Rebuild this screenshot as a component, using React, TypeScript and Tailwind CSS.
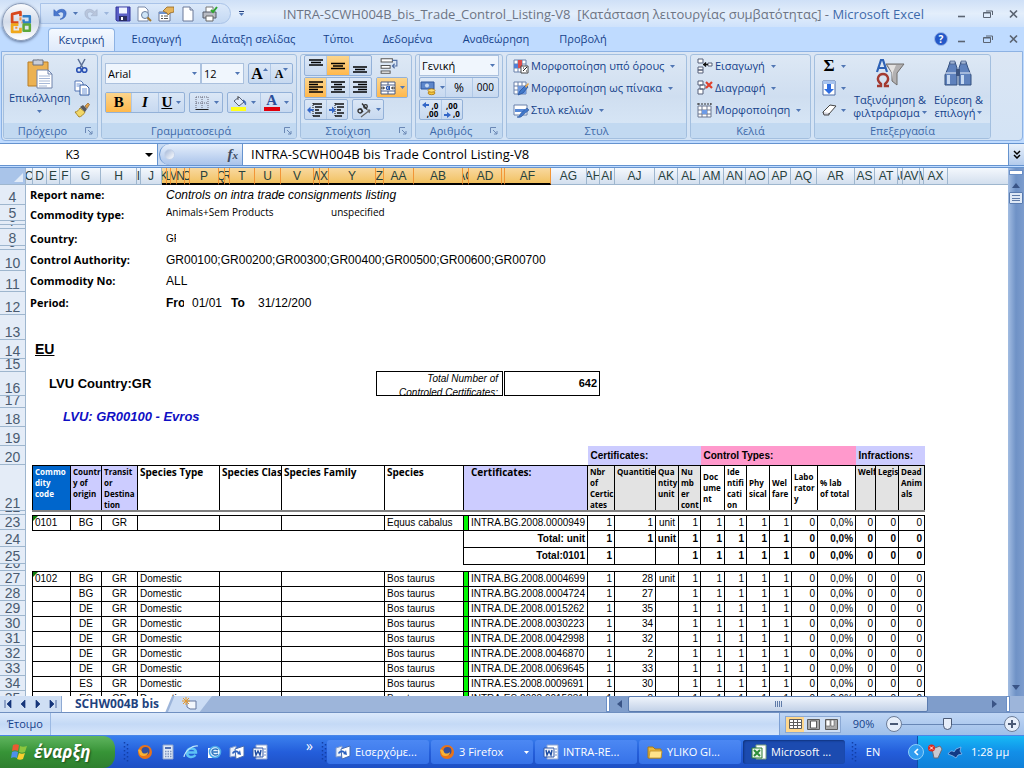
import React from 'react';
import clsx from 'clsx';

const Down: React.FC<{ className?: string }> = ({ className }) => (
  <svg viewBox="0 0 5 3" className={clsx('w-[5px] h-[3px] shrink-0', className)}>
    <path d="M0 0h5L2.500 3z" fill="#5076b4" />
  </svg>
);

const Icon: React.FC<{ size?: string; children: React.ReactNode }> = ({ size = 'w-4 h-4', children }) => (
  <svg viewBox="0 0 16 16" className={clsx(size, 'shrink-0')} fill="none">
    {children}
  </svg>
);

/* ---------- icons ---------- */

const OfficeLogo = () => (
  <svg viewBox="0 0 24 24" className="w-[25px] h-[25px]" fill="none" strokeLinejoin="round">
    <path d="M9 12H3V4l8-2v4" stroke="#d8481c" strokeWidth="2.600" />
    <path d="M13 6h7v6h-6V9" stroke="#2f7fc8" strokeWidth="2.400" />
    <path d="M9 14H3v7h8v-4" stroke="#f0a81c" strokeWidth="2.600" />
    <path d="M14 14h6v6h-6z" stroke="#5da83a" strokeWidth="2.400" />
    <path d="M11 7v3M7 16v2M12 12h1" stroke="#f7913a" strokeWidth="2" />
  </svg>
);

const Undo = () => (
  <Icon size="w-[14px] h-[14px]">
    <path d="M1 3v7h7L5.500 7.500C8 5 12 5 12 8.500S10 13 8 14c4 0 7-3 7-7 0-5-7-6-11-1.500z" fill="#4b79cf" stroke="#2d59b0" strokeWidth=".6" />
  </Icon>
);

const Redo = () => (
  <Icon size="w-[14px] h-[14px]">
    <path d="M15 3v7H8l2.500-2.500C8 5 4 5 4 8.500S6 13 8 14c-4 0-7-3-7-7 0-5 7-6 11-1.500z" fill="#b9c6dc" stroke="#9dadc8" strokeWidth=".6" />
  </Icon>
);

const Save = () => (
  <Icon>
    <path d="M1 1h14v14H2l-1-1z" fill="#5a5fc6" stroke="#33379b" />
    <path d="M4 1.500h8v6H4z" fill="#eef3ff" />
    <path d="M4 10h8v5H4z" fill="#292d62" />
    <path d="M6 11h2v3H6z" fill="#fff" />
  </Icon>
);

const Preview = () => (
  <Icon>
    <path d="M2 1h7l3 3v11H2z" fill="#fff" stroke="#7a8aa8" />
    <circle cx="9" cy="9" r="3.500" fill="#cfe5f7" stroke="#6b7f9d" />
    <path d="M11.500 11.500L15 15" stroke="#a67a2c" strokeWidth="2" />
  </Icon>
);

const Props = () => (
  <Icon>
    <path d="M1 6h11v9H1z" fill="#fff" stroke="#6a7998" />
    <path d="M1 6h11v2H1z" fill="#6d92cf" />
    <path d="M3 10h2M3 12.500h2M6 10h4M6 12.500h4" stroke="#555" />
    <path d="M5 5l4-4h7v5l-4 1-2 2-1-2z" fill="#e6b45c" stroke="#936520" strokeWidth=".8" />
  </Icon>
);

const NewDoc = () => (
  <Icon>
    <path d="M3 1h7l3 3v11H3z" fill="#fff" stroke="#6a7998" />
    <path d="M10 1v3h3" fill="#d5dff0" stroke="#6a7998" />
  </Icon>
);

const Printer = () => (
  <Icon>
    <path d="M4 1h7v6H4z" fill="#fff" stroke="#777" />
    <path d="M1 6h13v6H1z" fill="#b9bcc4" stroke="#555b68" />
    <path d="M4 10h7v5H4z" fill="#fff" stroke="#666" />
    <path d="M9 4l2 2 4-5" stroke="#2fa52f" strokeWidth="2" />
  </Icon>
);

const Paste = () => (
  <svg viewBox="0 0 28 32" className="w-7 h-8" fill="none">
    <path d="M2 4h20v24H2z" fill="#ecb252" stroke="#b87d25" />
    <path d="M7 2h4a2 2 0 012 0h4v5H7z" fill="#c9ced8" stroke="#6a7180" />
    <path d="M11 12h11l4 4v14H11z" fill="#fff" stroke="#6f83ac" />
    <path d="M22 12v4h4" stroke="#6f83ac" />
    <path d="M13 18h11M13 20.500h11M13 23h11M13 25.500h11M13 28h8" stroke="#9cb0d2" strokeWidth=".9" />
  </svg>
);

const Cut = () => (
  <Icon>
    <path d="M4 1l5 9M11 1L6 10" stroke="#5b6f96" strokeWidth="1.500" />
    <circle cx="5" cy="12" r="2.300" stroke="#2b52b4" strokeWidth="1.600" />
    <circle cx="10.500" cy="12" r="2.300" stroke="#2b52b4" strokeWidth="1.600" />
  </Icon>
);

const Copy = () => (
  <Icon>
    <path d="M1 1h6l2 2v8H1z" fill="#fff" stroke="#5476b6" />
    <path d="M6 5h6l3 3v7H6z" fill="#fff" stroke="#31589f" />
    <path d="M2.500 4h4M2.500 6h3M8 9h5M8 11h5M8 13h5" stroke="#6c93d6" />
  </Icon>
);

const Brush = () => (
  <Icon>
    <path d="M1 10c2 0 4-2 5-4l5 4c-1 2-4 5-6 5-1-2-3-3-4-5z" fill="#f1d768" stroke="#a8862a" />
    <path d="M6 5l3-2 4 4-2 3z" fill="#55585f" />
    <path d="M11 4l3-3 1.500 1.500-2.500 4z" fill="#e0a049" stroke="#83561c" strokeWidth=".6" />
  </Icon>
);

const lineSets = {
  top: 'M1 2h14M3 4.500h10M1 7h14',
  middle: 'M1 5.500h14M3 8h10M1 10.500h14',
  bottom: 'M1 9h14M3 11.500h10M1 14h14',
  left: 'M1 2h14M1 4.500h9M1 7h14M1 9.500h9M1 12h14',
  center: 'M1 2h14M4 4.500h8M1 7h14M4 9.500h8M1 12h14',
  right: 'M1 2h14M6 4.500h9M1 7h14M6 9.500h9M1 12h14',
};

const Lines: React.FC<{ kind: keyof typeof lineSets }> = ({ kind }) => (
  <Icon>
    <path d={lineSets[kind]} stroke="#000" strokeWidth="1.300" />
  </Icon>
);

const Indent: React.FC<{ flip?: boolean }> = ({ flip }) => (
  <Icon>
    <path d="M6 2h9M8 5h7M8 8h4M8 11h7M6 14h7" stroke="#111" strokeWidth="1.500" />
    <path d="M6 1v14" stroke="#111" strokeDasharray="1 1" />
    <path d={flip ? 'M0 7h3V4.500L6.500 8 3 11.500V9H0z' : 'M6.500 7h-3V4.500L0 8l3.500 3.500V9h3z'} fill="#3467c8" />
  </Icon>
);

const Wrap = () => (
  <Icon size="w-[18px] h-[18px]">
    <path d="M1 1.500h10v3H1zM1 7.500h8v2.500H1zM1 12.500h8v2H1z" fill="#fff" stroke="#555" strokeWidth=".9" />
    <path d="M11 3h4v5h-4M13 6l-2 2 2 2" stroke="#5471a5" />
  </Icon>
);

const Merge = () => (
  <Icon>
    <path d="M1 2h14v12H1zM1 5h14M1 11h14M8 2v3M8 11v3" fill="#fff" stroke="#4a5c84" />
    <path d="M1 8h3M12 8h3M3 6.500L4.500 8 3 9.500M13 6.500L11.500 8 13 9.500" stroke="#222" />
    <circle cx="7.700" cy="8" r="1.400" stroke="#1f4fae" strokeWidth="1.200" />
    <path d="M9.500 6v4" stroke="#1f4fae" />
  </Icon>
);

const Orient = () => (
  <Icon>
    <circle cx="4" cy="9" r="2" stroke="#333" strokeWidth="1.300" />
    <path d="M4.500 6.500L7 10M6 1.500l5 6" stroke="#333" strokeWidth="1.300" />
    <circle cx="9.500" cy="4.500" r="1.800" stroke="#333" strokeWidth="1.300" />
    <path d="M5 15L14 8M14 8h-3M14 8l-1 3" stroke="#666" strokeWidth="1.200" />
  </Icon>
);

const Money = () => (
  <Icon>
    <path d="M1 2h13v7H1z" fill="#5c86cb" stroke="#2c549c" />
    <circle cx="7" cy="5.500" r="2" fill="#c5d8f3" />
    <ellipse cx="11.500" cy="13" rx="3.500" ry="1.700" fill="#f5c63c" stroke="#a97512" strokeWidth=".8" />
    <ellipse cx="11.500" cy="10.500" rx="3.500" ry="1.700" fill="#ffdf72" stroke="#a97512" strokeWidth=".8" />
  </Icon>
);

const Decimals: React.FC<{ less?: boolean }> = ({ less }) => (
  <span className="relative flex flex-col w-4 h-4 text-[8px] leading-[8px] font-bold text-black">
    <span className={clsx(less ? '' : 'text-right')}>{less ? ',00' : ',0'}</span>
    <span className="text-right">{less ? ',0' : ',00'}</span>
    <svg viewBox="0 0 7 6" className={clsx('absolute w-[7px] h-[6px]', less ? 'left-0 bottom-0' : 'left-0 top-0')}>
      <path d={less ? 'M0 2h3V0l4 3-4 3V4H0z' : 'M7 2H4V0L0 3l4 3V4h3z'} fill="#3467c8" />
    </svg>
  </span>
);

const Borders = () => (
  <Icon>
    <path d="M2 2h12v12M2 2v12M8 2v12M2 8h12" stroke="#667" strokeDasharray="1 1" />
    <path d="M1.500 14.500h13" stroke="#222" strokeWidth="1.200" />
  </Icon>
);

const Fill = () => (
  <Icon>
    <path d="M3 6l5-4 5 5-5 4z" fill="#dfe9f8" stroke="#555f75" />
    <path d="M12 5c3 1 3 3 2.500 5L13 7z" fill="#3e6fc8" stroke="#2d55a4" strokeWidth=".6" />
    <path d="M7 1v4" stroke="#555" />
    <path d="M0 12h15v4H0z" fill="#ffff1a" />
  </Icon>
);

const GridBase = 'M1 2h12v12H1zM1 6h12M1 10h12M5 2v12M9 2v12';

const Conditional = () => (
  <Icon>
    <path d={GridBase} fill="#fff" stroke="#6980aa" />
    <path d="M5 2h4v8H5z" fill="#dc4d4d" />
    <path d="M1 6h4v4H1z" fill="#4f7fd6" />
    <path d="M8 8h7v7H8z" fill="#fff" stroke="#444" />
    <path d="M10 13l4-4M10 10h1M13 13h1" stroke="#222" />
  </Icon>
);

const FormatTable = () => (
  <Icon>
    <path d={GridBase} fill="#fff" stroke="#6980aa" />
    <path d="M5 6h8v8H5z" fill="#6d98de" />
    <path d="M5 15l2-4 6-6 2 2-5 6z" fill="#4278c9" stroke="#2a549c" strokeWidth=".8" />
    <path d="M12 6l3-3 1 1-3 4z" fill="#e3a752" />
  </Icon>
);

const CellStyles = () => (
  <Icon>
    <path d="M1 3h13v10H1z" fill="#fff" stroke="#6980aa" />
    <path d="M2 7h10v3H2z" fill="#5789d8" />
    <path d="M4 15c2 0 3-2 4-4l6-5 2 2-6 5c-1 2-4 3-6 2z" fill="#4278c9" stroke="#2a549c" strokeWidth=".6" />
  </Icon>
);

const InsertCells = () => (
  <Icon>
    <path d="M1 1h5v4H1zM1 9h5v3H1zM1 12h5v3H1zM11 5h4v3h-4z" fill="#fff" stroke="#555f78" />
    <path d="M6 6.500h5M9 4.500l-2 2 2 2" stroke="#111" strokeWidth="1.400" />
  </Icon>
);

const DeleteCells = () => (
  <Icon>
    <path d="M1 1h5v4H1zM3 5h5v4H3zM1 9h5v5H1z" fill="#fff" stroke="#555f78" />
    <path d="M9 2l6 6M15 2L9 8" stroke="#e0402c" strokeWidth="2.200" />
  </Icon>
);

const FormatCells = () => (
  <Icon>
    <path d="M1 4h13v11H1zM1 8h13M1 12h13M5 4v11M10 4v11" fill="#fff" stroke="#6a7690" />
    <path d="M5 8h5v4H5z" fill="#6d9be6" />
    <path d="M1 1v2M1 2h13M14 1v2" stroke="#333" strokeDasharray="2 1" />
  </Icon>
);

const FillDown = () => (
  <Icon>
    <path d="M2 1h12v14H2z" fill="#fff" stroke="#4c6ca8" />
    <path d="M2 1h12v3H2z" fill="#a7c3ee" />
    <path d="M6 4h4v5h3l-5 5-5-5h3z" fill="#2f6de0" />
  </Icon>
);

const Eraser = () => (
  <Icon>
    <path d="M2 10l7-7 6 1-7 8H3z" fill="#fff" stroke="#444" />
    <path d="M2 10l1 3h5v-2" fill="#d4d4de" stroke="#444" />
  </Icon>
);

const SortFilter = () => (
  <svg viewBox="0 0 30 30" className="w-[30px] h-[30px]" fill="none">
    <path d="M11 5h18l-7 9v12l-5-4v-8z" fill="#b3b1b2" stroke="#716e6c" />
    <path d="M13 6h8l-3 7-1 8v-7z" fill="#e4e2e1" />
    <path d="M2 13L6 1h2l4 12M4 9h6" stroke="#2f62b5" strokeWidth="2.200" />
    <path d="M2 27h4v-2c-6-5-2-10 2-10s8 5 2 10v2h4" stroke="#a33a31" strokeWidth="2.400" />
  </svg>
);

const Binoculars = () => (
  <svg viewBox="0 0 30 28" className="w-[30px] h-7" fill="none">
    <path d="M5 9l2-6h5l2 6v17H2V16zM16 9l2-6h5l2 6 3 7v10H16z" fill="#5f82bd" stroke="#34507f" />
    <path d="M4 16h3v9H4zM18 16h3v9h-3z" fill="#c6d9f2" />
    <path d="M2 14h12M16 14h12" stroke="#e8effa" />
    <path d="M13 10h4v7h-4z" fill="#3d5580" />
    <path d="M7 2h5v3H7zM18 2h5v3h-5z" fill="#9fb3d3" stroke="#455c86" strokeWidth=".7" />
  </svg>
);

const Firefox = () => (
  <Icon>
    <circle cx="8" cy="8" r="7" fill="#e8731a" />
    <circle cx="8.500" cy="7" r="4" fill="#34509e" />
    <path d="M1 6c2-1 3 0 4 2s4 2 6 0c0 4-5 5-8 3z" fill="#f9b233" />
  </Icon>
);

const Calc = () => (
  <Icon>
    <path d="M3 1h10v14H3z" fill="#dfe8f6" stroke="#8fa4cb" />
    <path d="M5 3h6v2H5z" fill="#4f70b4" />
    <path d="M5 7.500h7M5 10h7M5 12.500h7" stroke="#7d93bd" strokeWidth="1.500" strokeDasharray="1.500 1" />
  </Icon>
);

const Explorer = () => (
  <Icon>
    <path d="M3 8.500h10C13 3 4 3 4 8.500S10 14 12.500 11" stroke="#5ec3f5" strokeWidth="2.500" />
    <path d="M1 13C2 7 9 1 15 2" stroke="#bfe6fa" strokeWidth="1.200" />
  </Icon>
);

const OutlookExpress = () => (
  <Icon>
    <path d="M2 4h8v10H2z" fill="#fff" />
    <circle cx="9" cy="8" r="5.500" fill="#e6f3fd" stroke="#4ca9e8" strokeWidth="1.600" />
    <path d="M12 6c-2-2-6-1-6 2s4 4 6 2M7 8h5" stroke="#2a73bf" strokeWidth="1.500" />
  </Icon>
);

const MailIcon = () => (
  <Icon>
    <path d="M1 4l6-2v10l-6 1z" fill="#e9f0fb" stroke="#7e99cb" />
    <path d="M6 5l9-3v10l-8 3z" fill="#fff" stroke="#456bb0" />
    <path d="M3 9c2-3 5-3 7-1l1-2 1 5-4-1 1-1c-2-1-3-1-5 1z" fill="#2b61bf" />
  </Icon>
);

const WordIcon = () => (
  <Icon>
    <path d="M4 1h11v14H4z" fill="#fff" stroke="#8ba3d1" />
    <path d="M1 4h10v9H1z" fill="#f3f6fc" stroke="#3159a8" />
    <path d="M3 6l1 5 2-4 2 4 1-5" stroke="#1e4ca0" strokeWidth="1.400" />
    <path d="M12 5h2M12 8h2M12 11h2" stroke="#6f8cc4" />
  </Icon>
);

const FolderIcon = () => (
  <Icon>
    <path d="M1 3h5l2 2h6v9H1z" fill="#e9b73f" stroke="#a87a16" />
    <path d="M3 7h12l-1 7H2z" fill="#ffe38a" stroke="#bb8d23" strokeWidth=".8" />
  </Icon>
);

const ExcelIcon = () => (
  <Icon>
    <path d="M5 1h10v14H5z" fill="#fff" stroke="#7da37f" />
    <path d="M1 4h10v10H1z" fill="#e9f5e6" stroke="#2b7a35" />
    <path d="M3 6l6 6M9 6l-6 6" stroke="#2b8c38" strokeWidth="2" />
  </Icon>
);

const WindowsFlag = () => (
  <svg viewBox="0 0 20 18" className="w-5 h-[18px]">
    <path d="M3 2c2-1 4-1 6 0L8 8C6 7 4 7 2 8z" fill="#ea5a32" />
    <path d="M10 3c2 1 4 1 7 0l-2 6c-2 1-4 1-6 0z" fill="#8cc63e" />
    <path d="M2 9c2-1 4-1 6 0l-1 6c-2-1-4-1-6 0z" fill="#4f8fea" />
    <path d="M9 10c2 1 4 1 6 0l-2 6c-2 1-4 1-6 0z" fill="#fbcf2e" />
  </svg>
);

/* ---------- chrome ---------- */

const WindowButtons: React.FC<{ label: string }> = ({ label }) => (
  <div className="flex items-center gap-[14px]">
    <button aria-label={`Minimize ${label}`} className="w-3 h-3">
      <svg viewBox="0 0 12 12"><path d="M2 8.500h7" stroke="#5b6472" strokeWidth="1.600" /></svg>
    </button>
    <button aria-label={`Restore ${label}`} className="w-3 h-3">
      <svg viewBox="0 0 12 12" fill="none"><path d="M1.500 4.500h7v5h-7zM1.500 5h7M4 3h6.500v4" stroke="#5b6472" /></svg>
    </button>
    <button aria-label={`Close ${label}`} className="w-3 h-3">
      <svg viewBox="0 0 12 12"><path d="M2 2.500l7 7M9 2.500l-7 7" stroke="#5b6472" strokeWidth="1.700" /></svg>
    </button>
  </div>
);

const TitleBar = () => (
  <header className="h-[27px] flex items-center bg-linear-to-b from-[#cfe0f7] via-[#e3eefb] to-[#cfe2fb] pl-10 pr-1">
    <div className="h-[21px] w-[191px] shrink-0 flex items-center justify-between rounded-r-full border border-[#a9c3e8] bg-linear-to-b from-[#dce9fa] to-[#c3d8f3] pl-3 pr-3">
      <button aria-label="Undo"><Undo /></button>
      <Down />
      <button aria-label="Redo"><Redo /></button>
      <Down className="opacity-40" />
      <button aria-label="Save"><Save /></button>
      <button aria-label="Preview"><Preview /></button>
      <button aria-label="Properties"><Props /></button>
      <button aria-label="New"><NewDoc /></button>
      <button aria-label="Print"><Printer /></button>
    </div>
    <button aria-label="Customize" className="flex flex-col items-center gap-px w-5 shrink-0">
      <span className="w-[5px] h-px bg-[#27407c]" />
      <Down />
    </button>
    <h1 className="flex-1 text-center text-[13px] leading-4 text-[#6c7484] whitespace-pre">
      INTRA-SCWH004B_bis_Trade_Control_Listing-V8{'  '}[Κατάσταση λειτουργίας συμβατότητας] -{' '}
      <span className="text-[#3e6aaa]">Microsoft Excel</span>
    </h1>
    <WindowButtons label="application" />
  </header>
);

const tabs = [
  { name: 'Εισαγωγή', width: 'w-[83px]' },
  { name: 'Διάταξη σελίδας', width: 'w-[111px]' },
  { name: 'Τύποι', width: 'w-[59px]' },
  { name: 'Δεδομένα', width: 'w-[79px]' },
  { name: 'Αναθεώρηση', width: 'w-[98px]' },
  { name: 'Προβολή', width: 'w-[76px]' },
];

const TabBar = () => (
  <nav className="h-6 flex items-end bg-[#bfdbff] pl-12 pr-1">
    <button className="h-[23px] w-[67px] rounded-t border border-b-0 border-[#8db2e3] bg-linear-to-b from-[#f4f9ff] to-[#dfeafa] text-[11px] text-[#15428b]">
      Κεντρική
    </button>
    {tabs.map((t) => (
      <button key={t.name} className={clsx('h-[23px] text-[11px] text-[#15428b]', t.width)}>
        {t.name}
      </button>
    ))}
    <div className="flex-1 h-6 flex items-center justify-end gap-2">
      <button aria-label="Help" className="w-[14px] h-[14px] rounded-full border border-[#9db8e8] bg-[#2458c8] text-white text-[10px] leading-3 font-bold">
        ?
      </button>
      <WindowButtons label="workbook" />
    </div>
  </nav>
);

const Group: React.FC<{ title: string; width: string; launcher?: boolean; children: React.ReactNode }> = ({ title, width, launcher, children }) => (
  <section className={clsx('flex flex-col rounded-[3px] border border-[#a3bfdf] bg-linear-to-b from-[#dde8f5] via-[#cfdef0] to-[#dae9f8] overflow-hidden shrink-0', width)}>
    <div className="flex-1 min-h-0 px-[3px]">{children}</div>
    <div className={clsx('relative h-[15px] bg-[#c2d9f1] text-center text-[11px] leading-[15px] text-[#3e6aaa]', launcher && 'pr-4')}>
      {title}
      {launcher && (
        <button aria-label={title} className="absolute right-1 top-1 w-2 h-2">
          <svg viewBox="0 0 8 8" fill="none"><path d="M.5 6V.5H6M3 3l4 4M7 4v3H4" stroke="#6b88b5" /></svg>
        </button>
      )}
    </div>
  </section>
);

const BtnGroup: React.FC<{ className?: string; children: React.ReactNode }> = ({ className, children }) => (
  <div className={clsx('h-[21px] flex items-stretch rounded-[2px] border border-[#93b1d8] bg-linear-to-b from-[#dbe7f6] to-[#c7d9f0] divide-x divide-[#b0c8e6]', className)}>
    {children}
  </div>
);

const Btn: React.FC<{ label: string; active?: boolean; drop?: boolean; children: React.ReactNode }> = ({ label, active, drop, children }) => (
  <button
    aria-label={label}
    className={clsx('flex-1 flex items-center justify-center gap-1', active && 'bg-linear-to-b from-[#fbd58c] to-[#ffb84a]')}
  >
    {children}
    {drop && <Down />}
  </button>
);

const Combo: React.FC<{ label: string; value: string; className: string }> = ({ label, value, className }) => (
  <label className={clsx('relative h-[21px] flex items-center', className)}>
    <select aria-label={label} className="w-full h-full appearance-none border border-[#abc1de] bg-[#f0f6fd] pl-[2px] text-[11px] leading-4 text-black">
      <option>{value}</option>
    </select>
    <Down className="absolute right-1" />
  </label>
);

const TextBtn: React.FC<{ icon: React.ReactNode; text: string }> = ({ icon, text }) => (
  <button className="h-[22px] flex items-center gap-[2px] text-[11px] text-[#15428b] whitespace-nowrap">
    {icon}
    <span>{text}</span>
    <Down className="ml-1" />
  </button>
);

const Ribbon = () => (
  <div className="mx-px h-[90px] flex gap-[3px] rounded-b border border-[#8db2e3] bg-linear-to-b from-[#dbe6f4] to-[#d3e3f5] px-px pt-[2px] pb-px">
    <Group title="Πρόχειρο" width="w-[95px]" launcher>
      <div className="flex justify-between pt-[3px] pr-1">
        <button className="flex flex-col items-center text-[11px] leading-4 text-[#15428b] pl-[2px]">
          <Paste />
          Επικόλληση
          <Down className="mt-1" />
        </button>
        <div className="flex flex-col gap-[6px]">
          <button aria-label="Cut"><Cut /></button>
          <button aria-label="Copy"><Copy /></button>
          <button aria-label="Format painter"><Brush /></button>
        </div>
      </div>
    </Group>

    <Group title="Γραμματοσειρά" width="w-[196px]" launcher>
      <div className="flex flex-col gap-2 pt-2">
        <div className="flex">
          <Combo label="Font" value="Arial" className="w-24" />
          <Combo label="Font size" value="12" className="w-[43px]" />
          <BtnGroup className="ml-1 w-[45px] font-[Liberation_Serif] font-bold text-black">
            <Btn label="Grow font"><span className="text-[16px]">A</span><Down className="rotate-180 -ml-1 mb-2" /></Btn>
            <Btn label="Shrink font"><span className="text-[12px]">A</span><Down className="-ml-1 mb-2" /></Btn>
          </BtnGroup>
        </div>
        <div className="flex gap-1 font-[Liberation_Serif] font-bold text-[15px] text-black">
          <BtnGroup className="w-20">
            <Btn label="Bold" active>B</Btn>
            <Btn label="Italic"><i>I</i></Btn>
            <Btn label="Underline" drop><u>U</u></Btn>
          </BtnGroup>
          <BtnGroup className="w-[34px]">
            <Btn label="Borders" drop><Borders /></Btn>
          </BtnGroup>
          <BtnGroup className="w-[66px]">
            <Btn label="Fill colour" drop><Fill /></Btn>
            <Btn label="Font colour" drop>
              <span className="flex flex-col items-center text-[#2d4f9a] leading-[13px]">A<span className="w-4 h-1 bg-[#e0000c]" /></span>
            </Btn>
          </BtnGroup>
        </div>
      </div>
    </Group>

    <Group title="Στοίχιση" width="w-28" launcher>
      <div className="flex flex-col gap-px">
        <div className="flex gap-2">
          <BtnGroup className="w-[68px]">
            <Btn label="Top align"><Lines kind="top" /></Btn>
            <Btn label="Middle align" active><Lines kind="middle" /></Btn>
            <Btn label="Bottom align"><Lines kind="bottom" /></Btn>
          </BtnGroup>
          <button aria-label="Wrap text"><Wrap /></button>
        </div>
        <div className="flex gap-1">
          <BtnGroup className="w-[68px]">
            <Btn label="Align left" active><Lines kind="left" /></Btn>
            <Btn label="Align center"><Lines kind="center" /></Btn>
            <Btn label="Align right"><Lines kind="right" /></Btn>
          </BtnGroup>
          <BtnGroup className="w-8">
            <Btn label="Merge" active drop><Merge /></Btn>
          </BtnGroup>
        </div>
        <div className="flex gap-1">
          <BtnGroup className="w-11">
            <Btn label="Decrease indent"><Indent /></Btn>
            <Btn label="Increase indent"><Indent flip /></Btn>
          </BtnGroup>
          <BtnGroup className="w-8">
            <Btn label="Orientation" drop><Orient /></Btn>
          </BtnGroup>
        </div>
      </div>
    </Group>

    <Group title="Αριθμός" width="w-[88px]" launcher>
      <div className="flex flex-col gap-px">
        <Combo label="Number format" value="Γενική" className="w-20" />
        <BtnGroup className="w-20 text-[12px] text-black">
          <Btn label="Currency" drop><Money /></Btn>
          <Btn label="Percent">%</Btn>
          <Btn label="Thousands"><span className="text-[10px]">000</span></Btn>
        </BtnGroup>
        <BtnGroup className="w-11">
          <Btn label="Increase decimal"><Decimals /></Btn>
          <Btn label="Decrease decimal"><Decimals less /></Btn>
        </BtnGroup>
      </div>
    </Group>

    <Group title="Στυλ" width="w-[181px]">
      <div className="flex flex-col items-start pl-[3px]">
        <TextBtn icon={<Conditional />} text="Μορφοποίηση υπό όρους" />
        <TextBtn icon={<FormatTable />} text="Μορφοποίηση ως πίνακα" />
        <TextBtn icon={<CellStyles />} text="Στυλ κελιών" />
      </div>
    </Group>

    <Group title="Κελιά" width="w-[121px]">
      <div className="flex flex-col items-start pl-[3px]">
        <TextBtn icon={<InsertCells />} text="Εισαγωγή" />
        <TextBtn icon={<DeleteCells />} text="Διαγραφή" />
        <TextBtn icon={<FormatCells />} text="Μορφοποίηση" />
      </div>
    </Group>

    <Group title="Επεξεργασία" width="w-[177px]">
      <div className="flex gap-1 pl-[3px] pr-1">
        <div className="flex flex-col">
          <button aria-label="Sum" className="h-[22px] flex items-center gap-1 font-[Liberation_Serif] text-[17px] font-bold text-black"><span className="w-4">Σ</span><Down /></button>
          <button aria-label="Fill" className="h-[22px] flex items-center gap-1"><FillDown /><Down /></button>
          <button aria-label="Clear" className="h-[22px] flex items-center gap-1"><Eraser /><Down /></button>
        </div>
        <button className="flex-1 pt-1 flex flex-col items-center text-[11px] leading-[13px] text-[#15428b] whitespace-nowrap">
          <SortFilter />
          <span className="mt-1">Ταξινόμηση &amp;</span>
          <span className="flex items-center gap-[2px]">φιλτράρισμα<Down /></span>
        </button>
        <button className="pt-1 flex flex-col items-center text-[11px] leading-[13px] text-[#15428b] whitespace-nowrap">
          <span className="h-[30px]"><Binoculars /></span>
          <span className="mt-1">Εύρεση &amp;</span>
          <span className="flex items-center gap-[2px]">επιλογή<Down /></span>
        </button>
      </div>
    </Group>
  </div>
);

const FormulaBar = () => (
  <div className="mt-[2px] h-[23px] flex border-y border-[#6593cf] bg-[#c8daf2]">
    <div className="w-[158px] flex items-center bg-white pr-1 border-r border-[#6593cf]">
      <input aria-label="Name box" defaultValue="K3" className="min-w-0 flex-1 bg-white text-center text-[12px] text-black" />
      <button aria-label="Names">
        <svg viewBox="0 0 8 4" className="w-2 h-1"><path d="M0 0h8L4 4z" fill="#000" /></svg>
      </button>
    </div>
    <div className="w-[84px] ml-px flex items-center justify-between rounded-l-full border-x border-[#6593cf] bg-linear-to-b from-[#e6effb] to-[#a9c3ea] pl-1 pr-1">
      <span className="w-[11px] h-[11px] rounded-full border border-[#c3d2ea] bg-linear-to-br from-[#a5b8d8] to-white" />
      <button className="font-[Liberation_Serif] italic font-bold text-[15px] leading-4 text-[#404c63]">f<span className="text-[11px]">x</span></button>
    </div>
    <input aria-label="Formula" defaultValue="INTRA-SCWH004B bis Trade Control Listing-V8" className="flex-1 min-w-0 bg-white pl-2 text-[13px] text-black" />
    <button aria-label="Expand formula bar" className="w-4 flex items-center justify-center border-l border-[#6593cf] bg-linear-to-b from-[#e9f1fb] to-[#b3cbec]">
      <svg viewBox="0 0 8 9" className="w-2 h-[9px]" fill="none"><path d="M1 1l3 3 3-3M1 5l3 3 3-3" stroke="#000" strokeWidth="1.500" /></svg>
    </button>
  </div>
);

/* ---------- sheet ---------- */

const columns: [string, string, boolean?][] = [
  ['C', 'w-[7px]'], ['D', 'w-[14px]'], ['E', 'w-[13px]'], ['F', 'w-[11px]'], ['G', 'w-[30px]'], ['H', 'w-[36px]'],
  ['I', 'w-[4px]'], ['J', 'w-[21px]'], ['K', 'w-[5px]', true], ['L', 'w-[4px]', true], ['M', 'w-[6px]', true],
  ['N', 'w-[8px]', true], ['O', 'w-[5px]', true], ['P', 'w-[29px]', true], ['Q', 'w-[6px]', true], ['R', 'w-[5px]', true],
  ['T', 'w-[25px]', true], ['U', 'w-[26px]', true], ['V', 'w-[33px]', true], ['W', 'w-[6px]', true], ['X', 'w-[9px]', true],
  ['Y', 'w-[47px]', true], ['Z', 'w-[8px]', true], ['AA', 'w-[30px]', true], ['AB', 'w-[49px]', true], ['AC', 'w-[6px]', true],
  ['AD', 'w-[33px]', true], ['', 'w-[3px]', true], ['AF', 'w-[46px]', true], ['AG', 'w-[36px]'], ['AH', 'w-[13px]'],
  ['AI', 'w-[15px]'], ['AJ', 'w-[40px]'], ['AK', 'w-[23px]'], ['AL', 'w-[22px]'], ['AM', 'w-[24px]'], ['AN', 'w-[22px]'],
  ['AO', 'w-[23px]'], ['AP', 'w-[22px]'], ['AQ', 'w-[26px]'], ['AR', 'w-[38px]'], ['AS', 'w-[20px]'], ['AT', 'w-[23px]'],
  ['AU', 'w-[5px]'], ['AV', 'w-[17px]'], ['AW', 'w-[4px]'], ['AX', 'w-[24px]'],
];

const rowNumbers: [string, string][] = [
  ['4', 'h-[20px]'], ['5', 'h-[16px]'], ['6', 'h-[4px]'], ['7', 'h-[4px]'], ['8', 'h-[17px]'], ['9', 'h-[4px]'],
  ['10', 'h-[21px]'], ['11', 'h-[21px]'], ['12', 'h-[23px]'], ['13', 'h-[25px]'], ['14', 'h-[19px]'], ['15', 'h-[13px]'],
  ['16', 'h-[24px]'], ['17', 'h-[12px]'], ['18', 'h-[19px]'], ['19', 'h-[19px]'], ['20', 'h-[19px]'], ['21', 'h-[46px]'],
  ['22', 'h-[4px]'], ['23', 'h-[15px]'], ['24', 'h-[17px]'], ['25', 'h-[17px]'], ['26', 'h-[7px]'], ['27', 'h-[15px]'],
  ['28', 'h-[15px]'], ['29', 'h-[15px]'], ['30', 'h-[15px]'], ['31', 'h-[15px]'], ['32', 'h-[15px]'], ['33', 'h-[15px]'],
  ['34', 'h-[15px]'], ['35', 'h-[15px]'],
];

const ColumnHeader = () => (
  <div className="h-[17px] shrink-0 flex bg-linear-to-b from-[#f4f8fd] to-[#d3dfee] border-b border-[#9eb6ce] font-[Liberation_Sans] text-[12px] leading-4 text-[#27413e]">
    <div className="w-[26px] shrink-0 flex items-end justify-end border-r border-[#9eb6ce] bg-[#a9c4e9] p-[2px]">
      <svg viewBox="0 0 9 9" className="w-[9px] h-[9px]"><path d="M9 0v9H0z" fill="#e1ebf8" /></svg>
    </div>
    {columns.map(([name, width, selected], i) => (
      <div
        key={i}
        className={clsx(
          'h-[17px] shrink-0 overflow-hidden flex justify-center border-r',
          width,
          selected ? 'border-r-[#f29536] border-b-2 border-b-black bg-linear-to-b from-[#f9d99f] to-[#f1c15f]' : 'border-[#9eb6ce]'
        )}
      >
        {name}
      </div>
    ))}
  </div>
);

const RowHeader = () => (
  <div className="w-[26px] shrink-0 border-r border-[#9eb6ce] bg-[#e4ecf7] font-[Liberation_Sans] text-[14px] leading-[13px] text-[#4a5b70]">
    {rowNumbers.map(([n, height]) => (
      <div key={n} className={clsx('flex items-end justify-center overflow-hidden border-b border-[#9eb6ce]', height)}>
        {n}
      </div>
    ))}
  </div>
);

const FormRow: React.FC<{ label: string; height: string; children: React.ReactNode }> = ({ label, height, children }) => (
  <div className={clsx('flex items-center pl-1 whitespace-nowrap', height)}>
    <div className="w-[136px] pb-[2px] font-[Open_Sans] text-[11px] font-bold">{label}</div>
    {children}
  </div>
);

const ReportForm = () => (
  <div className="h-[261px] font-[Liberation_Sans] text-[12px] leading-[15px] text-black">
    <FormRow label="Report name:" height="h-5"><i>Controls on intra trade consignments listing</i></FormRow>
    <FormRow label="Commodity type:" height="h-5">
      <div className="flex font-[Open_Sans] text-[10px] pb-[6px]">
        <span className="w-[63px] overflow-hidden">Animals+Semen</span>
        <span className="w-[102px] pl-[3px]">Products</span>
        <span>unspecified</span>
      </div>
    </FormRow>
    <div className="h-1" />
    <FormRow label="Country:" height="h-[21px]"><span className="w-[10px] pb-[2px] overflow-hidden text-[10px]">GR</span></FormRow>
    <FormRow label="Control Authority:" height="h-[21px]">
      <span className="w-[385px] overflow-hidden">GR00100;GR00200;GR00300;GR00400;GR00500;GR00600;GR00700</span>
    </FormRow>
    <FormRow label="Commodity No:" height="h-[21px]">ALL</FormRow>
    <FormRow label="Period:" height="h-[23px]">
      <b className="w-[18px] overflow-hidden">Fro</b>
      <span className="w-[31px] ml-2">01/01</span>
      <b className="w-[27px] ml-2">To</b>
      <span>31/12/200</span>
    </FormRow>
    <div className="h-6" />
    <div className="h-[19px] pl-[9px] text-[14px] leading-5 font-bold underline">EU</div>
    <div className="h-[13px]" />
    <div className="h-[25px] flex items-center">
      <div className="w-[350px] pl-[23px] text-[13px] font-bold">LVU Country:GR</div>
      <div className="w-[127px] h-[25px] border border-black pr-1 text-right text-[10px] leading-[14px] italic overflow-hidden">
        Total Number of<br />Controled Certificates:
      </div>
      <div className="w-24 h-[25px] ml-px border border-black pr-[2px] text-right text-[11px] leading-[23px] font-bold">642</div>
    </div>
    <div className="h-[11px]" />
    <div className="h-[19px] pl-[37px] text-[13px] leading-[19px] font-bold italic text-[#0f0fc4]">LVU: GR00100 - Evros</div>
  </div>
);

const cell = 'border border-black overflow-hidden whitespace-nowrap p-0';

const headCells: { text: string; className: string; span?: number }[] = [
  { text: 'Commo\ndity\ncode', className: 'bg-[#0066cc] text-white' },
  { text: 'Countr\ny of\norigin', className: 'bg-[#ccccff]' },
  { text: 'Transit\nor\nDestina\ntion', className: 'bg-[#ccccff]' },
  { text: 'Species Type', className: 'text-[10px] leading-[13px]' },
  { text: 'Species Class', className: 'text-[10px] leading-[13px]' },
  { text: 'Species Family', className: 'text-[10px] leading-[13px]' },
  { text: 'Species', className: 'text-[10px] leading-[13px]' },
  { text: 'Certificates:', className: 'bg-[#ccccff] text-[10px] leading-[13px] pl-[7px]', span: 2 },
  { text: 'Nbr\nof\nCertic\nates', className: 'bg-[#e3e3e3]' },
  { text: 'Quantities', className: 'bg-[#e3e3e3]' },
  { text: 'Qua\nntity\nunit', className: 'bg-[#e3e3e3]' },
  { text: 'Nu\nmb\ner\ncont', className: 'bg-[#e3e3e3]' },
  { text: 'Doc\nume\nnt', className: 'align-middle' },
  { text: 'Ide\nntifi\ncati\non', className: 'align-middle' },
  { text: 'Phy\nsical', className: 'align-middle' },
  { text: 'Wel\nfare', className: 'align-middle' },
  { text: 'Labo\nrator\ny', className: 'align-middle' },
  { text: '% lab\nof total', className: 'align-middle' },
  { text: 'Welfare', className: 'bg-[#e3e3e3]' },
  { text: 'Legislation', className: 'bg-[#e3e3e3]' },
  { text: 'Dead\nAnim\nals', className: 'bg-[#e3e3e3]' },
];

const rows = [
  { id: 27, code: '0102', origin: 'BG', cert: 'INTRA.BG.2008.0004699', qty: '28', unit: 'unit' },
  { id: 28, code: '', origin: 'BG', cert: 'INTRA.BG.2008.0004724', qty: '27', unit: '' },
  { id: 29, code: '', origin: 'DE', cert: 'INTRA.DE.2008.0015262', qty: '35', unit: '' },
  { id: 30, code: '', origin: 'DE', cert: 'INTRA.DE.2008.0030223', qty: '34', unit: '' },
  { id: 31, code: '', origin: 'DE', cert: 'INTRA.DE.2008.0042998', qty: '32', unit: '' },
  { id: 32, code: '', origin: 'DE', cert: 'INTRA.DE.2008.0046870', qty: '2', unit: '' },
  { id: 33, code: '', origin: 'DE', cert: 'INTRA.DE.2008.0069645', qty: '33', unit: '' },
  { id: 34, code: '', origin: 'ES', cert: 'INTRA.ES.2008.0009691', qty: '30', unit: '' },
  { id: 35, code: '', origin: 'ES', cert: 'INTRA.ES.2008.0015331', qty: '3', unit: '' },
];

const controls = ['1', '1', '1', '1', '1', '0', '0,0%', '0', '0', '0'];

const Controls = () => (
  <>
    {controls.map((v, i) => (
      <td key={i} className={clsx(cell, 'text-right pr-[2px]')}>{v}</td>
    ))}
  </>
);

const DataRow: React.FC<{ code: string; origin: string; type: string; species: string; cert: string; qty: string; unit: string }> = (r) => (
  <tr className="h-[15px]">
    <td className={clsx(cell, 'relative pl-[2px]')}>
      {r.code}
      {r.code && (
        <svg viewBox="0 0 5 5" className="absolute left-0 top-0 w-[5px] h-[5px]"><path d="M0 0h5L0 5z" fill="#0b7a0b" /></svg>
      )}
    </td>
    <td className={clsx(cell, 'text-center')}>{r.origin}</td>
    <td className={clsx(cell, 'text-center')}>GR</td>
    <td className={clsx(cell, 'pl-[2px]')}>{r.type}</td>
    <td className={cell} />
    <td className={cell} />
    <td className={clsx(cell, 'pl-[2px]')}>{r.species}</td>
    <td className={clsx(cell, 'bg-[#00f500]')} />
    <td className={clsx(cell, 'pl-[2px]')}>{r.cert}</td>
    <td className={clsx(cell, 'text-right pr-[2px]')}>1</td>
    <td className={clsx(cell, 'text-right pr-[2px]')}>{r.qty}</td>
    <td className={clsx(cell, 'text-center')}>{r.unit}</td>
    <Controls />
  </tr>
);

const TotalRow: React.FC<{ label: string; qty: string; unit: string }> = ({ label, qty, unit }) => (
  <tr className="h-[17px] font-bold">
    <td colSpan={7} className="p-0" />
    <td colSpan={2} className={clsx(cell, 'text-right pr-[2px]')}>{label}</td>
    <td className={clsx(cell, 'text-right pr-[2px]')}>1</td>
    <td className={clsx(cell, 'text-right pr-[2px]')}>{qty}</td>
    <td className={clsx(cell, 'text-center')}>{unit}</td>
    <Controls />
  </tr>
);

const ReportTable = () => (
  <table className="ml-[6px] w-[892px] table-fixed border-collapse font-[Liberation_Sans] text-[10px] leading-[13px] text-black">
    <colgroup>
      <col className="w-[38px]" /><col className="w-[31px]" /><col className="w-[36px]" /><col className="w-[82px]" />
      <col className="w-[62px]" /><col className="w-[103px]" /><col className="w-[79px]" /><col className="w-[5px]" />
      <col className="w-[119px]" /><col className="w-[27px]" /><col className="w-[41px]" /><col className="w-[23px]" />
      <col className="w-[22px]" /><col className="w-[24px]" /><col className="w-[22px]" /><col className="w-[23px]" />
      <col className="w-[22px]" /><col className="w-[26px]" /><col className="w-[38px]" /><col className="w-[20px]" />
      <col className="w-[23px]" /><col className="w-[26px]" />
    </colgroup>
    <thead>
      <tr className="h-[19px] text-left">
        <td colSpan={9} className="p-0" />
        <th colSpan={4} className="p-0 pl-[3px] bg-[#ccccff]">Certificates:</th>
        <th colSpan={6} className="p-0 pl-[3px] bg-[#ff99cc]">Control Types:</th>
        <th colSpan={3} className="p-0 pl-[3px] bg-[#ccccff]">Infractions:</th>
      </tr>
      <tr className="h-[46px] text-left align-top font-[Open_Sans] text-[8px] leading-[11px]">
        {headCells.map((h) => (
          <th
            key={h.text}
            colSpan={h.span}
            className={clsx('border border-black border-b-2 border-b-[#808080] overflow-hidden whitespace-pre p-0 pl-[2px]', h.className)}
          >
            {h.text}
          </th>
        ))}
      </tr>
    </thead>
    <tbody>
      <tr className="h-1"><td colSpan={22} className="p-0" /></tr>
      <DataRow code="0101" origin="BG" type="" species="Equus cabalus" cert="INTRA.BG.2008.0000949" qty="1" unit="unit" />
      <TotalRow label="Total: unit" qty="1" unit="unit" />
      <TotalRow label="Total:0101" qty="" unit="" />
      <tr className="h-[7px]"><td colSpan={22} className="p-0" /></tr>
      {rows.map((r) => (
        <DataRow key={r.id} code={r.code} origin={r.origin} type="Domestic" species="Bos taurus" cert={r.cert} qty={r.qty} unit={r.unit} />
      ))}
    </tbody>
  </table>
);

const VerticalScroll = () => (
  <div className="w-4 shrink-0 flex flex-col items-center bg-linear-to-r from-[#a3bde2] via-[#6f92c6] to-[#7c9ccd]">
    <span className="mt-[2px] w-[14px] h-[5px] border border-[#6b8fc6] bg-white" />
    <button aria-label="Scroll up" className="mt-2"><svg viewBox="0 0 8 5" className="w-2 h-[5px]"><path d="M4 0l4 5H0z" fill="#3a5486" /></svg></button>
    <div className="mt-1 w-[14px] h-3 flex flex-col items-center justify-evenly rounded-[1px] border border-[#5b7cb0] bg-[#dfe9f6]">
      <span className="w-2 h-px bg-[#5f7ba8]" />
      <span className="w-2 h-px bg-[#5f7ba8]" />
      <span className="w-2 h-px bg-[#5f7ba8]" />
    </div>
    <span className="flex-1" />
    <button aria-label="Scroll down" className="mb-[6px]"><svg viewBox="0 0 8 5" className="w-2 h-[5px]"><path d="M0 0h8L4 5z" fill="#3a5486" /></svg></button>
  </div>
);

const SheetTabs = () => (
  <div className="h-[17px] flex items-stretch border-b border-[#6f8fc0] bg-[#9db5da]">
    <div className="w-[62px] flex items-center justify-around border-r border-[#8faad3] bg-[#cfdff4] px-px">
      {['M1 0v8M7 0v8L3 4z', 'M6 0v8L2 4z', 'M2 0v8l4-4z', 'M7 0v8M1 0v8l4-4z'].map((d) => (
        <button key={d} aria-label="Move between sheets">
          <svg viewBox="0 0 8 8" className="w-2 h-2"><path d={d} fill="#15357a" stroke="#15357a" strokeWidth=".7" /></svg>
        </button>
      ))}
    </div>
    <button className="w-[110px] bg-white text-[12px] leading-4 font-bold text-[#1f437f] [clip-path:polygon(0_0,100%_0,94%_100%,0_100%)]">
      SCHW004B bis
    </button>
    <button aria-label="Insert sheet" className="w-11 -ml-1 flex items-center justify-center bg-[#cbdcf4] [clip-path:polygon(15%_0,100%_0,72%_100%,0_100%)]">
      <svg viewBox="0 0 16 14" className="w-4 h-[14px]" fill="none">
        <path d="M5 4h9v8H8l-3-2z" fill="#f2f6fc" stroke="#64779e" />
        <path d="M4 0v8M0 4h8M1 1l6 6M7 1L1 7" stroke="#e79a2c" />
      </svg>
    </button>
    <div className="flex-1" />
    <div className="w-1 border border-[#6b8fc6] bg-white" />
    <div className="w-[396px] flex items-stretch bg-[#7f9dcb]">
      <button aria-label="Scroll left" className="w-[18px] flex items-center justify-center"><svg viewBox="0 0 5 8" className="w-[5px] h-2"><path d="M5 0v8L0 4z" fill="#3a5486" /></svg></button>
      <div className="w-[300px] flex items-center justify-center gap-px rounded-[2px] border border-[#5b7cb0] bg-linear-to-b from-[#eff4fb] to-[#c3d2e8]">
        {[0, 1, 2, 3].map((i) => <span key={i} className="w-px h-[6px] bg-[#5f7ba8]" />)}
      </div>
      <span className="flex-1" />
      <button aria-label="Scroll right" className="w-6 flex items-center justify-center"><svg viewBox="0 0 5 8" className="w-[5px] h-2"><path d="M0 0v8l5-4z" fill="#3a5486" /></svg></button>
    </div>
    <div className="w-1 border border-[#6b8fc6] bg-white" />
    <div className="w-[14px]" />
  </div>
);

const StatusBar = () => (
  <footer className="h-[22px] flex items-stretch bg-linear-to-b from-[#dbe9fb] via-[#c4d9f6] to-[#d7e6fb] text-[12px] text-[#15428b]">
    <div className="w-[51px] flex items-center pl-[7px] text-[11px] border-r border-[#9bb9e3]">Έτοιμο</div>
    <div className="flex-1" />
    <div className="w-[245px] flex items-center justify-between border-l border-[#7c9fd3] bg-linear-to-b from-[#c0d6f4] to-[#9fbfe9] pl-[5px] pr-1">
      <div className="flex h-[17px] border border-[#8aa8d4] bg-[#cfdff4]">
        <button aria-label="Normal view" className="w-[18px] flex items-center justify-center bg-[#ffd78c]">
          <svg viewBox="0 0 13 10" className="w-[13px] h-[10px]" fill="#fff"><path d="M.5.5h12v9H.5zM.5 3.500h12M.5 6.500h12M4.500.5v9M8.500.5v9" stroke="#5c5c5c" /></svg>
        </button>
        <button aria-label="Page layout view" className="w-[18px] flex items-center justify-center">
          <svg viewBox="0 0 13 11" className="w-[13px] h-[11px]"><path d="M.5.5h12v10H.5z" fill="#aaa" stroke="#5c5c5c" /><path d="M3.500 2h6v7h-6z" fill="#fff" stroke="#5c5c5c" /></svg>
        </button>
        <button aria-label="Page break view" className="w-[18px] flex items-center justify-center">
          <svg viewBox="0 0 13 11" className="w-[13px] h-[11px]"><path d="M.5.5h12v10H.5z" fill="#aaa" stroke="#5c5c5c" /><path d="M1 1h4v6H1zM6 1h3v6H6z" fill="#fff" stroke="#5c5c5c" strokeWidth=".6" /></svg>
        </button>
      </div>
      <button className="text-[11px]">90%</button>
      <div className="flex items-center">
        <button aria-label="Zoom out" className="w-4 h-4 flex items-center justify-center rounded-full border border-[#6b7c98] bg-[#e6eefa]"><span className="w-2 h-[2px] bg-[#4b5a76]" /></button>
        <div className="relative w-[102px] flex items-center">
          <span className="w-full h-px bg-[#6786b5]" />
          <input
            type="range"
            aria-label="Zoom"
            min="10"
            max="190"
            defaultValue="90"
            className="absolute inset-x-0 appearance-none bg-transparent h-3 [&::-webkit-slider-thumb]:appearance-none [&::-webkit-slider-thumb]:w-[9px] [&::-webkit-slider-thumb]:h-3 [&::-webkit-slider-thumb]:bg-[#e6eefa] [&::-webkit-slider-thumb]:border [&::-webkit-slider-thumb]:border-[#4b5a76] [&::-webkit-slider-thumb]:rounded-b-full"
          />
        </div>
        <button aria-label="Zoom in" className="relative w-4 h-4 flex items-center justify-center rounded-full border border-[#6b7c98] bg-[#e6eefa]">
          <span className="w-2 h-[2px] bg-[#4b5a76]" />
          <span className="absolute w-[2px] h-2 bg-[#4b5a76]" />
        </button>
      </div>
    </div>
  </footer>
);

const Dots = () => (
  <svg viewBox="0 0 6 22" className="w-[6px] h-[22px] shrink-0">
    <path d="M1.500 1v20M4.500 3v18" stroke="#123fa6" strokeWidth="1.500" strokeDasharray="1.500 2.500" />
  </svg>
);

const tasks = [
  { text: 'Εισερχόμε...', icon: <MailIcon /> },
  { text: '3 Firefox', icon: <Firefox />, group: true },
  { text: 'INTRA-RE...', icon: <WordIcon /> },
  { text: 'YLIKO GI...', icon: <FolderIcon /> },
  { text: 'Microsoft ...', icon: <ExcelIcon />, active: true },
];

const Taskbar = () => (
  <div className="h-[33px] flex items-center bg-linear-to-b from-[#3b80ee] via-[#245edb] to-[#1d4fc4] border-t border-[#4a86e8] text-[11px] text-white">
    <button className="w-[115px] h-full shrink-0 flex items-center gap-1 pl-[10px] rounded-r-xl bg-linear-to-b from-[#5fb55f] via-[#379437] to-[#2f7f2f] text-[17px] leading-5 italic font-bold [text-shadow:1px_1px_2px_#1c4d1c]">
      <WindowsFlag />
      έναρξη
    </button>
    <div className="ml-2 w-[204px] flex items-center">
      <Dots />
      <div className="ml-2 flex gap-[7px]">
        <button aria-label="Firefox"><Firefox /></button>
        <button aria-label="Calculator"><Calc /></button>
        <button aria-label="Internet Explorer"><Explorer /></button>
        <button aria-label="Outlook Express"><OutlookExpress /></button>
        <button aria-label="Mail"><MailIcon /></button>
        <button aria-label="Word"><WordIcon /></button>
      </div>
      <span className="flex-1" />
      <button aria-label="More" className="mb-3 mr-2 leading-3 text-[14px]">»</button>
      <Dots />
    </div>
    <div className="flex-1 flex gap-[2px]">
      {tasks.map((t) => (
        <button
          key={t.text}
          className={clsx(
            'w-[102px] h-6 flex items-center gap-1 rounded-[3px] pl-2 pr-1 whitespace-nowrap',
            t.active ? 'bg-[#1c4bb0] shadow-[inset_1px_1px_2px_#10347f]' : 'bg-linear-to-b from-[#4c88f3] to-[#3672e8]'
          )}
        >
          {t.icon}
          <span className="flex-1 text-left">{t.text}</span>
          {t.group && <svg viewBox="0 0 5 3" className="w-[5px] h-[3px]"><path d="M0 0h5L2.500 3z" fill="#fff" /></svg>}
        </button>
      ))}
    </div>
    <Dots />
    <button className="w-[60px] text-center text-[11px] pr-7">EN</button>
    <div className="relative w-[107px] h-full flex items-center gap-1 border-l border-[#0d4fa8] bg-linear-to-b from-[#19b9f5] via-[#128fe8] to-[#1080d8] pl-[9px]">
      <button aria-label="Show hidden icons" className="absolute -left-[10px] w-4 h-4 rounded-full bg-[#2f9cf0] border border-[#8ed0fa] flex items-center justify-center">
        <svg viewBox="0 0 6 8" className="w-[6px] h-2" fill="none"><path d="M5 1L2 4l3 3" stroke="#fff" strokeWidth="1.600" /></svg>
      </button>
      <Icon>
        <path d="M5 5l8-3 2 3-4 9H7z" fill="#c9c9d2" stroke="#6b6b78" />
        <circle cx="4.500" cy="4" r="3.500" fill="#dd2a1f" />
        <path d="M3 2.500l3 3M6 2.500l-3 3" stroke="#fff" />
      </Icon>
      <Icon>
        <path d="M1 10c2-3 4-4 6-2l2-3 5-2-1 4 2 3-4 1-2 3-3-2z" fill="#123a86" stroke="#8bbcf0" strokeWidth=".8" />
      </Icon>
      <span className="ml-1">1:28 μμ</span>
    </div>
  </div>
);

export default function App() {
  return (
    <div className="relative h-screen w-full flex flex-col overflow-hidden bg-[#bfdbff] font-[Open_Sans,Noto_Sans,sans-serif]">
      <TitleBar />
      <TabBar />
      <Ribbon />
      <FormulaBar />
      <main className="mt-px flex-1 min-h-0 flex border-t border-[#6593cf]">
        <div className="flex-1 min-w-0 flex flex-col overflow-hidden bg-white">
          <ColumnHeader />
          <div className="flex-1 min-h-0 flex overflow-hidden">
            <RowHeader />
            <div className="flex-1 min-w-0">
              <ReportForm />
              <ReportTable />
            </div>
          </div>
        </div>
        <VerticalScroll />
      </main>
      <SheetTabs />
      <StatusBar />
      <Taskbar />
      <button
        aria-label="Office"
        className="absolute left-[2px] top-[3px] w-[38px] h-[38px] rounded-full border border-[#8b9cb8] bg-linear-to-b from-[#fbfcfe] via-[#d3dcea] to-white shadow-[0_1px_3px_#5b6f92] flex items-center justify-center"
      >
        <OfficeLogo />
      </button>
    </div>
  );
}
